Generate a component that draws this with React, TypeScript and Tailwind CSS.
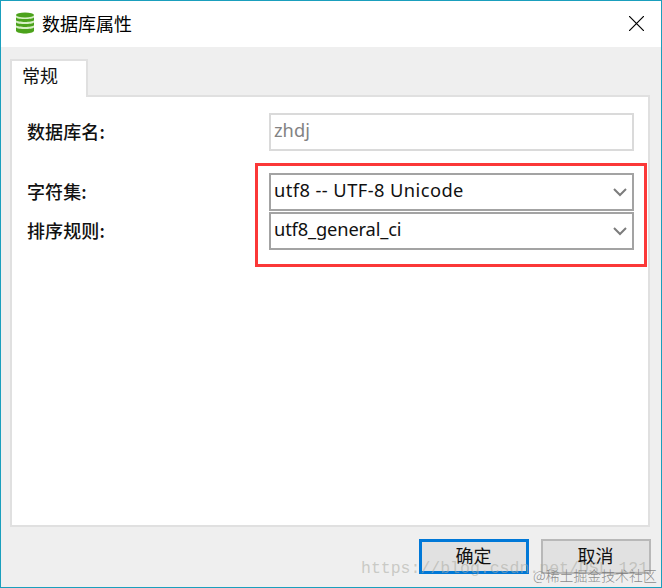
import { clsx } from "clsx";

interface SelectFieldProps {
  value: string;
  textClass: string;
}

const LABEL = "w-[242px] shrink-0 text-[18px] leading-[36px] font-[450] tracking-[0.1px]";

function DatabaseIcon() {
  return (
    <svg width="20" height="23" viewBox="0 0 20 23" fill="none">
      <path d="M1 3v16c0 1.700 4 2.500 9 2.500s9-.8 9-2.500V3z" fill="#d6efc4" />
      <ellipse cx="10" cy="3" rx="9" ry="2.600" fill="#4ba21b" />
      <path d="M1 5.500c2 2 16 2 18 0v2.700c-2 2.300-16 2.300-18 0z" fill="#4ba21b" />
      <path d="M1 10.500c2 2 16 2 18 0v2.700c-2 2.300-16 2.300-18 0z" fill="#4ba21b" />
      <path d="M1 15.500c2 2 16 2 18 0v3.500c-2 3.300-16 3.300-18 0z" fill="#4ba21b" />
    </svg>
  );
}

function SelectField({ value, textClass }: SelectFieldProps) {
  return (
    <button
      type="button"
      className="flex h-[38px] w-[365px] items-center justify-between border border-[#a3a3a3] bg-white pr-[6px] pl-[4px] text-left inset-ring inset-ring-[#a3a3a3]"
    >
      <span className={clsx("pb-[4px] font-['Noto_Sans','Noto_Sans_CJK_SC',sans-serif] whitespace-pre", textClass)}>
        {value}
      </span>
      <svg width="14" height="9" viewBox="0 0 14 9" fill="none" stroke="#7c7c7c" strokeWidth="2">
        <path d="M1 1l6 6 6-6" />
      </svg>
    </button>
  );
}

function DialogButton({ label, primary }: { label: string; primary?: boolean }) {
  return (
    <button
      type="button"
      className={clsx(
        "flex h-[35px] w-[110px] items-center justify-center bg-[#e1e1e1] pr-px pb-[2px] text-[18px]",
        primary ? "border-[3px] border-[#0078d7]" : "border-2 border-[#b8b8b8]"
      )}
    >
      {label}
    </button>
  );
}

export default function App() {
  return (
    <div className="relative flex h-[588px] w-[662px] flex-col overflow-hidden border border-[#1a9fbd] bg-[#efefef] font-['Noto_Sans_CJK_SC',sans-serif] text-[#111]">
      <header className="flex h-[46px] shrink-0 items-center justify-between bg-white pr-[17px] pl-[14px]">
        <div className="flex items-center gap-[7px] pb-[2px]">
          <DatabaseIcon />
          <h1 className="text-[18px] leading-6 text-black">数据库属性</h1>
        </div>
        <button type="button" aria-label="关闭" className="pb-px">
          <svg width="15" height="15" viewBox="0 0 15 15" stroke="#000" strokeWidth="1.200">
            <path d="M0 0l15 15M15 0L0 15" />
          </svg>
        </button>
      </header>

      <div className="mt-3 ml-[9px] flex w-[640px] flex-col">
        <div className="z-10 -mb-[2px] h-[38px] w-[78px] border-2 border-b-0 border-[#e0e0e0] bg-white pl-[10px] text-[18px] leading-[29px]">
          常规
        </div>
        <div className="h-[432px] border-2 border-[#e0e0e0] bg-white pt-4 pl-[15px]">
          <div className="flex">
            <label className={LABEL}>数据库名:</label>
            <input
              readOnly
              value="zhdj"
              className="h-[38px] w-[365px] border-2 border-[#dadada] bg-white pb-[5px] pl-[3px] font-['Noto_Sans',sans-serif] text-[18.3px] text-[#838383] outline-none"
            />
          </div>
          <div className="relative mt-[22px] flex flex-col gap-px">
            <div className="flex">
              <label className={LABEL}>字符集:</label>
              <SelectField value="utf8 -- UTF-8 Unicode" textClass="text-[18.3px] tracking-[0.43px]" />
            </div>
            <div className="flex">
              <label className={LABEL}>排序规则:</label>
              <SelectField value="utf8_general_ci" textClass="text-[18.3px] tracking-[-0.15px]" />
            </div>
            {/* highlight around both selects */}
            <div className="absolute -top-[10px] left-[228px] h-[104px] w-[392px] border-[3px] border-[#fb3838]" />
          </div>
        </div>
      </div>

      <footer className="mt-3 flex gap-3 pl-[418px]">
        <DialogButton label="确定" primary />
        <DialogButton label="取消" />
      </footer>

      {/* watermarks */}
      <div className="absolute top-[556px] left-[360px] font-['Liberation_Mono',monospace] text-[16.5px] leading-6 whitespace-nowrap text-[#a9aaa2]/55">
        https://blog.csdn.net/DSL_121
      </div>
      <div className="absolute top-[562px] left-[532px] text-[13.9px] leading-6 font-light whitespace-nowrap text-[#777]/85">
        @稀土掘金技术社区
      </div>
    </div>
  );
}
